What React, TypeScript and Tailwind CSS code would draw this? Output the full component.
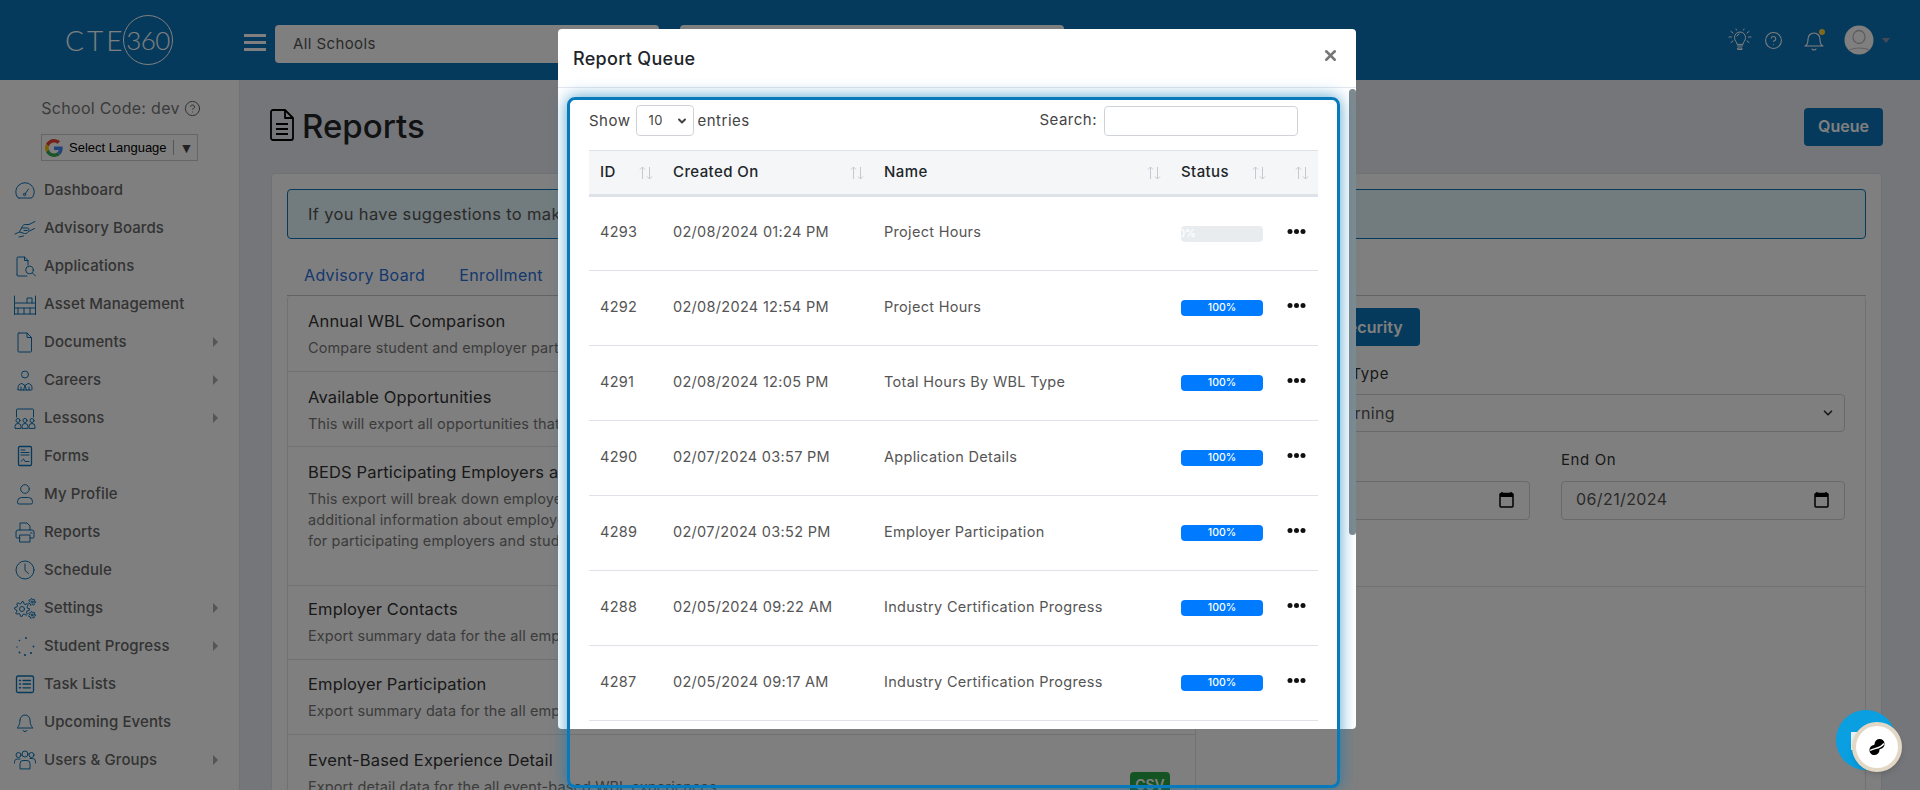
import React from "react";
import { ChevronDown, CircleHelp, X } from "lucide-react";

function gearPath(cx: number, cy: number, r: number, teeth: number) {
  const pts: string[] = [];
  const depth = r * 0.24;
  const n = teeth * 4;
  for (let i = 0; i < n; i++) {
    const a = (i / n) * Math.PI * 2;
    const out = i % 4 === 0 || i % 4 === 1;
    const rr = out ? r + depth : r - depth * 0.4;
    pts.push(`${(cx + rr * Math.cos(a)).toFixed(2)} ${(cy + rr * Math.sin(a)).toFixed(2)}`);
  }
  return `M${pts.join("L")}Z`;
}

function NavIcon({ name }: { name: string }) {
  let c: React.ReactNode = null;
  switch (name) {
    case "Dashboard":
      c = <><path d="M5 19h12a2 2 0 0 0 1.700-1A9.200 9.200 0 1 0 3.300 18 2 2 0 0 0 5 19z" /><path d="M11 15l3.500-5" /><circle cx="10.500" cy="15.500" r="1.200" /></>;
      break;
    case "Advisory Boards":
      c = <><path d="M1 17l4.500-2 5 1.500c2 .4 3-.8 4-2l6-3" /><path d="M5.500 15l2.500-5c1-2 2-2.500 4-2.500h3l6-3" /><path d="M8 11h5.500c2 0 1.800 2.500 0 2.500H10" /><path d="M5 20l4.500-1" /></>;
      break;
    case "Applications":
      c = <><path d="M3 20V3a1 1 0 0 1 1-1h6.500L14 5.500V10" /><path d="M3 20a1 1 0 0 0 1 1h9" /><path d="M10.500 2v3.500H14" /><circle cx="15.500" cy="15" r="3.800" /><path d="M18.300 17.800l3.200 3.200" /></>;
      break;
    case "Asset Management":
      c = <><path d="M.5 3v19M21.500 3v19M.5 10h21M.5 15h21M.5 21h21" /><path d="M13 10V5h5v5M4 15v6M10 15v6M16 15v6" /></>;
      break;
    case "Documents":
      c = <><path d="M5 2h8l4.500 4.500V20a1 1 0 0 1-1 1H5a1 1 0 0 1-1-1V3a1 1 0 0 1 1-1z" /><path d="M13 2v4.500h4.500" /></>;
      break;
    case "Careers":
      c = <><circle cx="11" cy="5.500" r="3.500" /><path d="M4 20.500v-1.500a4.500 4.500 0 0 1 4-4.500l3 2 3-2a4.500 4.500 0 0 1 4 4.500v1.500a.5.5 0 0 1-.5.5h-13a.5.5 0 0 1-.5-.5z" /><path d="M11 16.500l-1.500 4.500M11 16.500l1.500 4.500M7 21v-3M15 21v-3" /></>;
      break;
    case "Lessons":
      c = <><path d="M2.500 10V3a1 1 0 0 1 1-1h15a1 1 0 0 1 1 1v7" /><circle cx="4" cy="13.500" r="2" /><circle cx="11" cy="13.500" r="2" /><circle cx="18" cy="13.500" r="2" /><path d="M1 21v-1.500a3 3 0 0 1 6 0V21zM8 21v-1.500a3 3 0 0 1 6 0V21zM15 21v-1.500a3 3 0 0 1 6 0V21z" /></>;
      break;
    case "Forms":
      c = <><rect x="4.500" y="1.500" width="13" height="19" rx="1.200" strokeWidth="1.300" /><path d="M7 5h4M7 7.500h8M7 10h8" /><path d="M7 16.500l2.500-2.500 1.500 2.500h4" /></>;
      break;
    case "My Profile":
      c = <><circle cx="11" cy="6" r="4.300" /><path d="M3.500 19.500V18.500a4 4 0 0 1 4-4h7a4 4 0 0 1 4 4v1a1.500 1.500 0 0 1-1.500 1.500H5a1.500 1.500 0 0 1-1.500-1.500z" /></>;
      break;
    case "Reports":
      c = <><path d="M6 9V2h7l3 3v4" /><path d="M6 17H3a1 1 0 0 1-1-1v-5a2 2 0 0 1 2-2h14a2 2 0 0 1 2 2v5a1 1 0 0 1-1 1h-3" /><path d="M6 14h10v7H6z" /><path d="M16.500 12h1.500" /></>;
      break;
    case "Schedule":
      c = <><circle cx="11" cy="11" r="9" /><path d="M11 5v6.500l3.500 3" /></>;
      break;
    case "Settings":
      c = <><path d={gearPath(8, 12, 6, 8)} /><circle cx="8" cy="12" r="2.500" /><path d={gearPath(18, 5, 2.800, 7)} /><circle cx="18" cy="5" r="1" /><path d={gearPath(18, 18, 2.800, 7)} /><circle cx="18" cy="18" r="1" /></>;
      break;
    case "Student Progress":
      c = <g fill="#0c74b8" stroke="none"><circle cx="12" cy="3" r="1" /><circle cx="5.500" cy="5.500" r=".8" /><circle cx="3" cy="12" r=".7" /><circle cx="5.500" cy="17.500" r=".9" /><circle cx="11" cy="20" r="1.100" /><circle cx="17" cy="18" r="1.100" /><circle cx="19.500" cy="11.500" r=".9" /></g>;
      break;
    case "Task Lists":
      c = <><rect x="2.500" y="3" width="17" height="16.500" rx="1.500" strokeWidth="1.300" /><path d="M9 7.500h7.500M9 11h7.500M9 14.800h7.500" strokeWidth="1.300" /><path d="M5.500 7.500h1M5.500 11h1M5.500 14.800h1" strokeWidth="1.600" /></>;
      break;
    case "Upcoming Events":
      c = <><path d="M6 9a5 5 0 0 1 10 0c0 6 3 8 3 8H3s3-2 3-8" /><path d="M9 19.500c.4 1.500 3.600 1.500 4 0" /></>;
      break;
    case "Users & Groups":
      c = <><circle cx="4.500" cy="6" r="2.500" /><circle cx="17.500" cy="6" r="2.500" /><circle cx="11" cy="5" r="3" /><path d="M.5 14v-1.500A3 3 0 0 1 3.500 10H6M21.500 14v-1.500a3 3 0 0 0-3-3H16" /><path d="M6 19.500V14.500A3 3 0 0 1 9 11.500h4a3 3 0 0 1 3 3v5z" /></>;
      break;
  }
  return (
    <svg width="22" height="22" viewBox="0 0 22 22" fill="none" stroke="#0c74b8" strokeWidth="1" strokeLinecap="round" strokeLinejoin="round" className="mr-[8px] shrink-0">
      {c}
    </svg>
  );
}

const nav: [string, boolean][] = [
  ["Dashboard", false],
  ["Advisory Boards", false],
  ["Applications", false],
  ["Asset Management", false],
  ["Documents", true],
  ["Careers", true],
  ["Lessons", true],
  ["Forms", false],
  ["My Profile", false],
  ["Reports", false],
  ["Schedule", false],
  ["Settings", true],
  ["Student Progress", true],
  ["Task Lists", false],
  ["Upcoming Events", false],
  ["Users & Groups", true],
];

const rows: [string, string, string, number][] = [
  ["4293", "02/08/2024 01:24 PM", "Project Hours", 0],
  ["4292", "02/08/2024 12:54 PM", "Project Hours", 100],
  ["4291", "02/08/2024 12:05 PM", "Total Hours By WBL Type", 100],
  ["4290", "02/07/2024 03:57 PM", "Application Details", 100],
  ["4289", "02/07/2024 03:52 PM", "Employer Participation", 100],
  ["4288", "02/05/2024 09:22 AM", "Industry Certification Progress", 100],
  ["4287", "02/05/2024 09:17 AM", "Industry Certification Progress", 100],
];

const reports = [
  { t: "Annual WBL Comparison", d: ["Compare student and employer participation"], h: "h-[76px] pt-[12px]" },
  { t: "Available Opportunities", d: ["This will export all opportunities that are available"], h: "h-[75px] pt-[12px]" },
  { t: "BEDS Participating Employers and Students", d: ["This export will break down employer participation with", "additional information about employers and students", "for participating employers and students"], h: "h-[139px] pt-[12px]" },
  { t: "Employer Contacts", d: ["Export summary data for the all employer contacts"], h: "h-[74px] pt-[10px]" },
  { t: "Employer Participation", d: ["Export summary data for the all employer participation"], h: "h-[75px] pt-[11px]" },
  { t: "Event-Based Experience Detail", d: ["Export detail data for the all event-based WBL experiences"], h: "h-[75px] pt-[12px]", csv: true },
];

function Sort() {
  return (
    <svg width="14" height="14" viewBox="0 0 14 14" fill="none" stroke="#c6cad0" strokeWidth="1" className="shrink-0">
      <path d="M3.500 13V1M1 3.500 3.500 1 6 3.500M10.500 1v12M8 10.500l2.500 2.500 2.500-2.500" />
    </svg>
  );
}

function GoogleG() {
  return (
    <svg width="18" height="18" viewBox="0 0 48 48" className="shrink-0">
      <path fill="#EA4335" d="M24 9.500c3.500 0 6.700 1.200 9.200 3.600l6.900-6.900C35.900 2.400 30.500 0 24 0 14.600 0 6.500 5.400 2.600 13.200l8 6.200C12.500 13.700 17.800 9.500 24 9.500z" />
      <path fill="#4285F4" d="M47 24.500c0-1.600-.1-3.100-.4-4.500H24v9h13c-.6 3-2.300 5.500-4.800 7.200l7.700 6C44.400 37.900 47 31.800 47 24.500z" />
      <path fill="#FBBC05" d="M10.500 28.600c-.5-1.400-.8-3-.8-4.600s.3-3.200.8-4.600l-8-6.200C.9 16.500 0 20.100 0 24s.9 7.500 2.600 10.800l7.900-6.200z" />
      <path fill="#34A853" d="M24 48c6.500 0 11.900-2.100 15.900-5.800l-7.700-6c-2.200 1.400-4.900 2.300-8.200 2.300-6.200 0-11.500-4.200-13.400-9.900l-8 6.200C6.500 42.600 14.600 48 24 48z" />
    </svg>
  );
}

function Cal() {
  return (
    <svg width="15" height="17" viewBox="0 0 15 17" fill="none" className="shrink-0">
      <path d="M3 1v2M12 1v2" stroke="#000" strokeWidth="1.500" />
      <rect x="1" y="2.500" width="13" height="13.500" rx="1" stroke="#000" strokeWidth="1.500" />
      <rect x="1" y="2.500" width="13" height="3.500" fill="#000" />
    </svg>
  );
}

export default function App() {
  return (
    <div className="relative h-[790px] w-[1920px] overflow-hidden bg-[#ebedf2] text-[#212529] [font-family:Inter,sans-serif]">
      <header className="flex h-[80px] items-center bg-[#0c74b8]">
        <div className="flex w-[240px] shrink-0 items-center pl-[65px] text-white [font-family:Lato,sans-serif]">
          <span className="w-[58px] text-[28px] font-light leading-none tracking-[3px]">CTE</span>
          <span className="flex h-[50px] w-[50px] items-center justify-center rounded-full border border-white text-[26px] font-light leading-none tracking-[-0.500px]">360</span>
        </div>
        <div className="ml-[4px] mt-[4px] flex h-[17px] w-[22px] flex-col justify-between">
          <span className="h-[3px] bg-white" />
          <span className="h-[3px] bg-white" />
          <span className="h-[3px] bg-white" />
        </div>
        <div className="ml-[9px] mt-[8px] flex h-[38px] w-[384px] items-center rounded bg-white pl-[18px] text-[15px] tracking-[0.4px] text-[#555]">All Schools</div>
        <div className="ml-[21px] mt-[8px] flex h-[38px] w-[384px] items-center rounded bg-white" />
        <div className="ml-auto flex items-center pr-[30px] text-white">
          <svg width="24" height="24" viewBox="0 0 24 24" fill="none" stroke="currentColor" strokeWidth="1" strokeLinecap="round" strokeLinejoin="round">
            <path d="M9 16c0-2-2.500-3-2.500-6.500a5.500 5.500 0 0 1 11 0C17.500 13 15 14 15 16z" />
            <path d="M9.500 18h5M10 20h4v1.500h-4zM9 8a3 3 0 0 1 2-2" />
            <path d="M1 9h2.500M20.500 9H23M3 3.500l2 1.500M21 3.500 19 5M3 14.500l2-1.500M21 14.500 19 13M8 1l.5 1M16 1l-.5 1" />
          </svg>
          <CircleHelp size={19} strokeWidth={1.300} className="ml-[12px]" />
          <div className="relative ml-[20px]">
            <svg width="22" height="24" viewBox="0 0 22 24" fill="none" stroke="currentColor" strokeWidth="1.100" strokeLinecap="round" strokeLinejoin="round" className="block">
              <path d="M5 11a6 6 0 0 1 12 0c0 6 3 7 3 7H2s3-1 3-7" />
              <path d="M9 21c.5 1.200 3.500 1.200 4 0" />
            </svg>
            <span className="absolute right-0 top-[1px] h-[6px] w-[6px] rounded-full bg-[#ffd040]" />
          </div>
          <svg width="30" height="30" viewBox="0 0 30 30" className="ml-[19px] block">
            <defs><clipPath id="av"><circle cx="15" cy="15" r="14.500" /></clipPath></defs>
            <g clipPath="url(#av)">
              <rect width="30" height="30" fill="#ffffff" />
              <path d="M2 32c0-7 5-9 13-9s13 2 13 9" fill="none" stroke="#c4c4c4" strokeWidth="1.200" />
              <ellipse cx="15" cy="12" rx="6" ry="6.500" fill="#ffffff" stroke="#bbbbbb" strokeWidth="1.300" />
            </g>
          </svg>
          <span className="ml-[8px] h-0 w-0 border-x-[4px] border-t-[5px] border-x-transparent border-t-[#8d93b0]" />
        </div>
      </header>

      <div className="flex h-[710px]">
        <aside className="w-[240px] shrink-0 border-r border-[#dfe2e8] bg-white">
          <div className="flex h-[52px] items-end justify-center pl-[3px] text-[16px] tracking-[0.3px] text-[#777]">
            <span className="flex items-center gap-[4px] pb-[12px]">School Code: dev <CircleHelp size={17} strokeWidth={1.300} className="text-[#555]" /></span>
          </div>
          <div className="ml-[41px] mt-[2px] flex h-[27px] w-[157px] items-center border border-[#ccc] bg-white pl-[3px] text-[13px] text-black [font-family:'Liberation_Sans',sans-serif]">
            <GoogleG />
            <span className="ml-[6px]">Select Language</span>
            <span className="ml-[6px] h-[15px] border-l border-[#aaa]" />
            <span className="ml-[6px] text-[14px] leading-none text-[#444]">▼</span>
          </div>
          <nav className="mt-[10px]">
            {nav.map(([label, sub]) => (
              <div key={label} className="flex h-[38px] items-center pl-[14px] pr-[21px] text-[15px] font-medium tracking-[0.1px] text-[#666]">
                <NavIcon name={label} />
                <span>{label}</span>
                {sub && <span className="ml-auto h-0 w-0 border-y-[5px] border-l-[5px] border-y-transparent border-l-[#aaa]" />}
              </div>
            ))}
          </nav>
        </aside>

        <main className="min-w-0 flex-1 pl-[31px] pr-[38px]">
          <div className="flex h-[93px] items-center">
            <svg width="24" height="32" viewBox="0 0 24 32" fill="none" stroke="#000" strokeWidth="1.800" strokeLinejoin="round" className="-ml-[1px] -mt-[3px]">
              <path d="M3 1h12l8 8v20a2 2 0 0 1-2 2H3a2 2 0 0 1-2-2V3a2 2 0 0 1 2-2z" />
              <path d="M15 1v8h8" />
              <path d="M6 15h12M6 20h12M6 25h12" />
            </svg>
            <h1 className="ml-[8px] text-[33px] font-medium text-[#212529]">Reports</h1>
            <button className="ml-auto mr-[-1px] h-[38px] w-[79px] rounded bg-[#0c74b8] pb-[2px] text-[16px] font-semibold text-white">Queue</button>
          </div>
          <div className="h-[640px] rounded border border-[#dfe2e8] bg-white px-[15px] pt-[15px]">
            <div className="flex h-[50px] items-center rounded border border-[#0c74b8] bg-[#e4f7fb] px-[20px] text-[16.500px] tracking-[0.35px] text-[#555]">If you have suggestions to make, please contact us</div>
            <div className="flex h-[57px] items-center gap-[34px] border-b border-[#c4c7cc] pl-[17px] pt-[15px] text-[16px] tracking-[0.35px] text-[#2a6fdb]">
              <span>Advisory Board</span>
              <span>Enrollment</span>
            </div>
            <div className="flex rounded-t border border-t-0 border-[#dfe2e8]">
              <div className="w-[908px] shrink-0 border-r border-[#dfe2e8]">
                {reports.map((r) => (
                  <div key={r.t} className={`relative border-b border-[#dfe2e8] px-[20px] ${r.h}`}>
                    <div className="mb-[3px] text-[16.500px] leading-[26px] tracking-[0.15px] text-[#333]">{r.t}</div>
                    {r.d.map((l) => <div key={l} className="text-[14.500px] leading-[21px] tracking-[0.1px] text-[#777]">{l}</div>)}
                    {r.csv && <span className="absolute right-[25px] top-[37px] h-[30px] w-[40px] rounded bg-[#28a745] pt-[2px] text-center text-[14px] font-semibold text-white">CSV</span>}
                  </div>
                ))}
              </div>
              <div className="h-[291px] flex-1 border-b border-[#dfe2e8] pl-[20px] pr-[20px] pt-[12px]">
                <button className="ml-[104px] h-[38px] w-[100px] rounded bg-[#0c74b8] text-[16px] font-semibold text-white">Security</button>
                <div className="mt-[16px] h-[24px] w-[173px] text-right text-[15px] leading-[24px] tracking-[0.6px] text-[#333]">Report Export Type</div>
                <div className="mt-[8px] flex h-[38px] items-center justify-between rounded border border-[#cfd3d8] pl-[8px] pr-[9px] text-[16px] tracking-[0.3px] text-[#555]">Work-Based Learning<ChevronDown size={14} strokeWidth={3} className="text-[#333]" /></div>
                <div className="mt-[16px] grid grid-cols-[1fr_284px] gap-[31px]">
                  <div>
                    <div className="h-[24px] text-[15px] leading-[24px] tracking-[0.6px] text-[#333]">Start On</div>
                    <div className="mt-[9px] flex h-[39px] items-center justify-between rounded border border-[#cfd3d8] pb-[3px] pl-[14px] pr-[15px] text-[16px] tracking-[0.4px] text-[#555]">09/01/2023<Cal /></div>
                  </div>
                  <div>
                    <div className="h-[24px] text-[15px] leading-[24px] tracking-[0.6px] text-[#333]">End On</div>
                    <div className="mt-[9px] flex h-[39px] items-center justify-between rounded border border-[#cfd3d8] pb-[3px] pl-[14px] pr-[15px] text-[16px] tracking-[0.4px] text-[#555]">06/21/2024<Cal /></div>
                  </div>
                </div>
              </div>
            </div>
          </div>
        </main>
      </div>

      <div className="absolute inset-0 bg-black/50" />

      <div className="absolute left-[558px] top-[29px] h-[700px] w-[798px] overflow-hidden rounded bg-white">
        <div className="flex h-[59px] items-center justify-between border-b border-[#e4e8ee] pl-[15px] pr-[17px]">
          <h2 className="text-[18px] font-medium tracking-[0.3px] text-[#212529]">Report Queue</h2>
          <X size={17} strokeWidth={3.500} className="-mt-[5px] text-[#777]" />
        </div>
        <div className="pl-[31px] pr-[38px] pt-[17px]">
          <div className="flex h-[31px] items-center text-[15px] tracking-[0.5px] text-[#444]">
            <span className="pt-[1px]">Show</span>
            <span className="ml-[5px] flex h-[31px] w-[58px] items-center justify-between rounded border border-[#cfd3d8] pl-[12px] pr-[5px] text-[13px]">10<ChevronDown size={12} strokeWidth={4} /></span>
            <span className="ml-[4px] pt-[1px]">entries</span>
            <span className="ml-auto">Search:</span>
            <span className="ml-[7px] mr-[20px] h-[30px] w-[194px] rounded border border-[#cfd3d8]" />
          </div>
          <table className="mt-[14px] w-[729px] table-fixed border-collapse text-[14.500px] tracking-[0.3px]">
            <colgroup>
              <col className="w-[73px]" />
              <col className="w-[211px]" />
              <col className="w-[297px]" />
              <col className="w-[105px]" />
              <col className="w-[43px]" />
            </colgroup>
            <thead>
              <tr className="h-[45px] border-b-[3px] border-t border-[#dfe2e8] bg-[#f4f6f8] text-left font-medium text-[#212529]">
                {["ID", "Created On", "Name", "Status", ""].map((h, i) => (
                  <th key={i} className="px-0 font-medium">
                    <div className={`flex items-center justify-between pr-[9px] ${i === 4 ? "" : "pl-[11px]"}`}>
                      <span className="text-[15px] tracking-[0.4px]">{h}</span>
                      <Sort />
                    </div>
                  </th>
                ))}
              </tr>
            </thead>
            <tbody>
              {rows.map(([id, created, name, pct]) => (
                <tr key={id} className="h-[75px] border-b border-[#dfe2e8] text-[#555]">
                  <td className="pb-[3px] pl-[11px]">{id}</td>
                  <td className="pb-[3px] pl-[11px]">{created}</td>
                  <td className="pb-[3px] pl-[11px]">{name}</td>
                  <td className="pl-[11px]">
                    <div className="flex h-[16px] w-[82px] items-center overflow-hidden rounded bg-[#e9ecef] text-[11px] font-medium tracking-normal text-white">
                      {pct === 100
                        ? <div className="w-full bg-[#007bff] text-center text-[10.500px] leading-[16px]">100%</div>
                        : <div className="-ml-[3px]">0%</div>}
                    </div>
                  </td>
                  <td>
                    <svg width="19" height="5" viewBox="0 0 19 5" className="-mt-[5px] ml-[12px] block" fill="#111"><circle cx="3" cy="2.500" r="2.500" /><circle cx="9.500" cy="2.500" r="2.500" /><circle cx="16" cy="2.500" r="2.500" /></svg>
                  </td>
                </tr>
              ))}
            </tbody>
          </table>
        </div>
      </div>
      <div className="absolute left-[1349px] top-[89px] h-[446px] w-[7px] rounded bg-[#7e8a90]" />
      <div className="absolute left-[567px] top-[97px] h-[691px] w-[773px] rounded-[8px] border-[3px] border-[#0879bb] shadow-[0_0_16px_rgba(8,121,187,0.7)]" />

      <div className="absolute left-[1836px] top-[710px] h-[60px] w-[60px] rounded-full bg-[#0a9fe0]" />
      <div className="absolute left-[1851px] top-[732px] h-[18px] w-[10px] bg-[#e6f2f8]" />
      <div className="absolute left-[1852px] top-[722px] flex h-[50px] w-[50px] items-center justify-center rounded-full border-[4px] border-[#e3d8c6] bg-white shadow-md">
        <svg width="22" height="22" viewBox="0 0 22 22">
          <g transform="rotate(40 11 11)">
            <ellipse cx="11" cy="7" rx="5" ry="5" fill="#000" />
            <ellipse cx="11" cy="15" rx="5" ry="5" fill="#000" />
            <rect x="7.500" y="7" width="7" height="8" fill="#000" />
          </g>
          <path d="M4 14.500C8 12 14 13 18 7.500" stroke="#fff" strokeWidth="1.400" fill="none" />
        </svg>
      </div>
    </div>
  );
}
